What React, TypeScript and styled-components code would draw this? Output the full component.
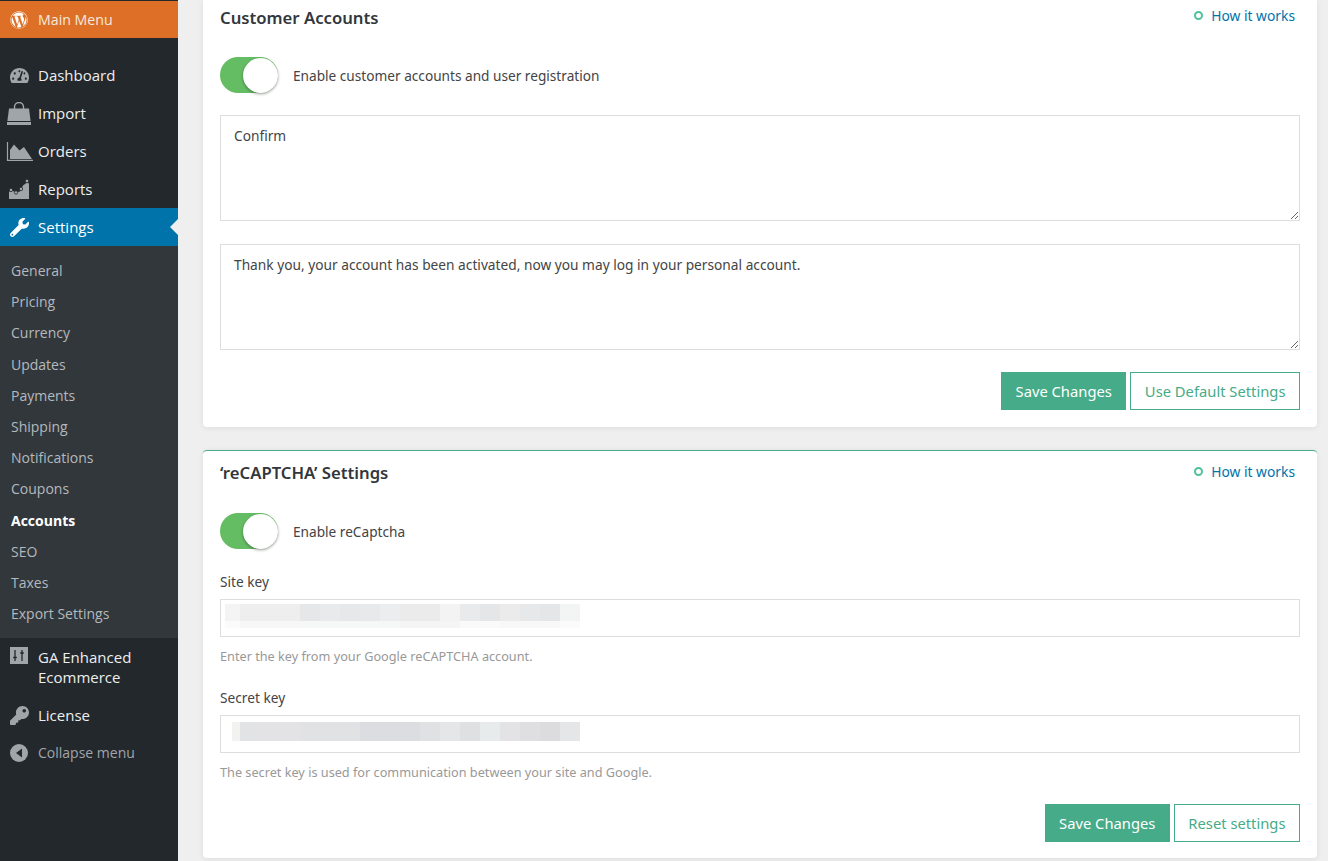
import { ReactNode } from "react";
import styled, { createGlobalStyle } from "styled-components";
import { FaWordpress, FaTachometerAlt, FaWrench, FaKey } from "react-icons/fa";

const GlobalStyle = createGlobalStyle`
  html, body {
    margin: 0;
    height: 100%;
    overflow: hidden;
    background: #efefef;
  }
  * {
    box-sizing: border-box;
  }
`;

const Page = styled.div`
  display: flex;
  height: 861px;
  font-family: "Noto Sans", "Open Sans", sans-serif;
`;

const Sidebar = styled.nav`
  flex: 0 0 178px;
  background: #23282d;
  padding-top: 1px;
  font-family: "Open Sans", "Noto Sans", sans-serif;
`;

const MainMenu = styled.div`
  height: 37px;
  display: flex;
  align-items: center;
  background: #dd7026;
  color: #f4e9df;
  font-size: 14.2px;
  margin-bottom: 18px;
`;

const IconSlot = styled.span<{ $light?: boolean }>`
  flex: 0 0 38px;
  display: flex;
  justify-content: center;
  align-items: center;
  color: ${(p) => (p.$light ? "#fff" : "#a0a5aa")};
  svg {
    display: block;
  }
`;

const MenuItem = styled.div<{ $active?: boolean; $muted?: boolean; $tall?: boolean }>`
  position: relative;
  min-height: 38px;
  display: flex;
  align-items: ${(p) => (p.$tall ? "flex-start" : "center")};
  padding-top: ${(p) => (p.$tall ? "9px" : "0")};
  padding-bottom: ${(p) => (p.$tall ? "9px" : "0")};
  background: ${(p) => (p.$active ? "#0073aa" : "transparent")};
  color: ${(p) => (p.$muted ? "#a0a5aa" : p.$active ? "#fff" : "#eee")};
  font-size: ${(p) => (p.$muted ? "14px" : "15px")};
  line-height: 20px;
`;

const ActiveArrow = styled.span`
  position: absolute;
  right: 0;
  top: 50%;
  margin-top: -8px;
  border: 8px solid transparent;
  border-left-width: 0;
  border-right-color: #efefef;
`;

const SubMenu = styled.div`
  background: #32373c;
  padding: 9px 0;
`;

const SubItem = styled.div<{ $current?: boolean }>`
  height: 31.2px;
  display: flex;
  align-items: center;
  padding-left: 11px;
  font-size: 14px;
  color: ${(p) => (p.$current ? "#fff" : "#b4b9be")};
  font-weight: ${(p) => (p.$current ? 700 : 400)};
`;

const Content = styled.main`
  flex: 1;
  padding: 0 11px 0 25px;
  display: flex;
  flex-direction: column;
  gap: 23px;
`;

const Card = styled.section<{ $accent?: boolean; $height: number }>`
  height: ${(p) => p.$height}px;
  flex: none;
  padding: 0 17px;
  background: #fff;
  border-top: ${(p) => (p.$accent ? "1px solid #45ab88" : "0")};
  border-radius: ${(p) => (p.$accent ? "4px" : "0 0 4px 4px")};
  box-shadow: 0 1px 6px rgba(0, 0, 0, 0.08);
`;

const CardHead = styled.header<{ $top: number; $height: number; $linkTop: number }>`
  display: flex;
  justify-content: space-between;
  padding: ${(p) => p.$top}px 5px 0 0;
  height: ${(p) => p.$height}px;
  a {
    margin-top: ${(p) => p.$linkTop}px;
  }
`;

const CardTitle = styled.h2`
  margin: 0;
  font-size: 16.7px;
  line-height: 24px;
  font-weight: 600;
  color: #32373c;
`;

const HowLink = styled.a`
  display: flex;
  align-items: center;
  gap: 8px;
  height: 20px;
  font-size: 13.8px;
  color: #0073aa;
`;

const HowDot = styled.span`
  width: 9px;
  height: 9px;
  border: 2px solid #4fc19d;
  border-radius: 50%;
`;

const ToggleRow = styled.div`
  display: flex;
  align-items: center;
  gap: 15px;
  height: 36px;
  font-size: 13.65px;
  color: #444;
`;

const ToggleText = styled.span`
  padding-top: 1px;
`;

const Toggle = styled.span`
  position: relative;
  width: 58px;
  height: 36px;
  border-radius: 18px;
  background: #64bd63;
`;

const Knob = styled.span`
  position: absolute;
  right: 0;
  top: 1px;
  width: 35px;
  height: 35px;
  border-radius: 50%;
  background: #fff;
  box-shadow: 0 1px 3px rgba(0, 0, 0, 0.4);
`;

const Area = styled.textarea<{ $top: number }>`
  display: block;
  width: 100%;
  height: 106px;
  margin-top: ${(p) => p.$top}px;
  padding: 10px 13px;
  border: 1px solid #ddd;
  border-radius: 0;
  outline: none;
  font: 13.72px/20px "Noto Sans", "Open Sans", sans-serif;
  color: #444;
`;

const ButtonRow = styled.div<{ $top: number }>`
  display: flex;
  justify-content: flex-end;
  gap: 4px;
  margin-top: ${(p) => p.$top}px;
`;

const SaveButton = styled.button`
  height: 38px;
  padding: 0 13.5px;
  border: 1px solid #45ab88;
  border-radius: 0;
  background: #45ab88;
  color: #fff;
  font: 14.75px "Noto Sans", "Open Sans", sans-serif;
`;

const GhostButton = styled(SaveButton)`
  background: #fff;
  color: #45ab88;
`;

const FieldLabel = styled.div<{ $top: number }>`
  margin-top: ${(p) => p.$top}px;
  height: 20px;
  line-height: 20px;
  font-size: 13.7px;
  color: #444;
`;

const InputBox = styled.div`
  position: relative;
  height: 38px;
  margin-top: 7px;
  border: 1px solid #ddd;
`;

const Mosaic = styled.div`
  position: absolute;
  left: 0;
  top: 0;
  right: 0;
  bottom: 0;
  overflow: hidden;
`;

const MosaicRow = styled.div<{ $y: number; $h: number; $x: number }>`
  position: absolute;
  left: ${(p) => p.$x}px;
  top: ${(p) => p.$y}px;
  height: ${(p) => p.$h}px;
  display: flex;
`;

const MosaicCell = styled.span<{ $w: number; $c: string }>`
  flex: 0 0 ${(p) => p.$w}px;
  background: ${(p) => p.$c};
`;

const Help = styled.div`
  margin-top: 10px;
  height: 18px;
  line-height: 18px;
  font-size: 12.7px;
  color: #999;
`;

const BagIcon = () => (
  <svg width="24" height="23" viewBox="0 0 24 23" fill="currentColor">
    <path d="M2 6.5h20l1.6 12.5H.4z" />
    <path d="M0 20h24v3H0z" />
    <path d="M7.5 8V5a4.5 4.5 0 0 1 9 0v3" fill="none" stroke="currentColor" strokeWidth="1.4" />
  </svg>
);

const AreaIcon = () => (
  <svg width="28" height="19" viewBox="0 0 28 19" fill="currentColor">
    <path d="M2.5 0v18.4H28" fill="none" stroke="currentColor" strokeWidth="1.2" />
    <path d="M5 17V8l4-5.5 5.5 6L19 5l8 12z" />
  </svg>
);

const ReportsIcon = () => (
  <svg width="20" height="20" viewBox="0 0 20 20" fill="currentColor">
    <path d="M0 20v-7l2-2 5 2.5 4-1 3-6 4-3 2 1v15.500z" />
    <g fill="#a0a5aa" stroke="#23282d" strokeWidth="0.8">
      <circle cx="2" cy="11" r="1.7" />
      <circle cx="7" cy="13.500" r="1.7" />
      <circle cx="12" cy="10" r="1.7" />
      <circle cx="18" cy="2" r="1.8" />
    </g>
  </svg>
);

const SlidersIcon = () => (
  <svg width="18" height="17" viewBox="0 0 18 17">
    <rect width="18" height="17" fill="#a0a5aa" />
    <path d="M5 3v11M3.200 10.500h3.600M12 3v11M10.200 6h3.600" stroke="#23282d" strokeWidth="1.3" />
  </svg>
);

const CollapseIcon = () => (
  <svg width="18" height="18" viewBox="0 0 18 18">
    <circle cx="9" cy="9" r="9" fill="#a0a5aa" />
    <path d="M12 4.500v9L6 9z" fill="#23282d" />
  </svg>
);

type Cell = [number, string];

const siteTop: Cell[] = [
  [15, "#f4f4f4"], [60, "#eeeeef"], [20, "#e6e7e8"], [20, "#e9eaeb"], [20, "#e7e8e9"], [20, "#e8e9ea"],
  [20, "#ecedee"], [40, "#ebebec"], [20, "#f3f3f3"], [20, "#e9eaeb"], [20, "#e5e6e7"], [20, "#ebebec"],
  [20, "#e7e8e9"], [20, "#e5e6e7"], [20, "#f3f4f4"],
];
const siteBottom: Cell[] = [
  [15, "#fbfbfb"], [60, "#f7f7f7"], [100, "#f6f7f7"], [60, "#f5f5f5"], [40, "#fafafa"], [60, "#f8f8f8"], [20, "#fbfbfb"],
];
const secretTop: Cell[] = [
  [8, "#f2f2f1"], [20, "#e2e3e5"], [40, "#e3e3e5"], [60, "#e1e2e4"], [60, "#dcdde0"], [20, "#e0e1e3"],
  [20, "#e5e6e8"], [20, "#dfe0e2"], [20, "#e8ebec"], [20, "#e3e3e5"], [20, "#dfdfe1"], [20, "#dcdcde"], [20, "#e5e6e8"],
];

const Strip = ({ x, y, h, cells }: { x: number; y: number; h: number; cells: Cell[] }) => (
  <MosaicRow $x={x} $y={y} $h={h}>
    {cells.map(([w, c], i) => (
      <MosaicCell key={i} $w={w} $c={c} />
    ))}
  </MosaicRow>
);

const subItems = [
  "General", "Pricing", "Currency", "Updates", "Payments", "Shipping",
  "Notifications", "Coupons", "Accounts", "SEO", "Taxes", "Export Settings",
];

const Item = ({ icon, children, ...rest }: { icon: ReactNode; children: ReactNode; $muted?: boolean }) => (
  <MenuItem {...rest}>
    <IconSlot>{icon}</IconSlot>
    <span>{children}</span>
  </MenuItem>
);

const How = () => (
  <HowLink>
    <HowDot />
    How it works
  </HowLink>
);

const Switch = ({ label }: { label: string }) => (
  <ToggleRow>
    <Toggle>
      <Knob />
    </Toggle>
    <ToggleText>{label}</ToggleText>
  </ToggleRow>
);

export default function App() {
  return (
    <Page>
      <GlobalStyle />
      <Sidebar>
        <MainMenu>
          <IconSlot $light>
            <FaWordpress size={18} />
          </IconSlot>
          Main Menu
        </MainMenu>
        <Item icon={<FaTachometerAlt size={19} />}>Dashboard</Item>
        <Item icon={<BagIcon />}>Import</Item>
        <Item icon={<AreaIcon />}>Orders</Item>
        <Item icon={<ReportsIcon />}>Reports</Item>
        <MenuItem $active>
          <IconSlot $light>
            <FaWrench size={19} />
          </IconSlot>
          Settings
          <ActiveArrow />
        </MenuItem>
        <SubMenu>
          {subItems.map((name) => (
            <SubItem key={name} $current={name === "Accounts"}>
              {name}
            </SubItem>
          ))}
        </SubMenu>
        <MenuItem $tall>
          <IconSlot>
            <SlidersIcon />
          </IconSlot>
          <span>
            GA Enhanced
            <br />
            Ecommerce
          </span>
        </MenuItem>
        <Item icon={<FaKey size={19} />}>License</Item>
        <Item $muted icon={<CollapseIcon />}>
          Collapse menu
        </Item>
      </Sidebar>
      <Content>
        <Card $height={427}>
          <CardHead $top={6} $height={57} $linkTop={-1}>
            <CardTitle>Customer Accounts</CardTitle>
            <How />
          </CardHead>
          <Switch label="Enable customer accounts and user registration" />
          <Area $top={22} defaultValue="Confirm" />
          <Area $top={23} defaultValue="Thank you, your account has been activated, now you may log in your personal account." />
          <ButtonRow $top={22}>
            <SaveButton>Save Changes</SaveButton>
            <GhostButton>Use Default Settings</GhostButton>
          </ButtonRow>
        </Card>
        <Card $accent $height={408}>
          <CardHead $top={10} $height={62} $linkTop={0}>
            <CardTitle>‘reCAPTCHA’ Settings</CardTitle>
            <How />
          </CardHead>
          <Switch label="Enable reCaptcha" />
          <FieldLabel $top={23}>Site key</FieldLabel>
          <InputBox>
            <Mosaic>
              <Strip x={4} y={4} h={17} cells={siteTop} />
              <Strip x={4} y={21} h={7} cells={siteBottom} />
            </Mosaic>
          </InputBox>
          <Help>Enter the key from your Google reCAPTCHA account.</Help>
          <FieldLabel $top={23}>Secret key</FieldLabel>
          <InputBox>
            <Mosaic>
              <Strip x={11} y={6} h={19} cells={secretTop} />
            </Mosaic>
          </InputBox>
          <Help>The secret key is used for communication between your site and Google.</Help>
          <ButtonRow $top={23}>
            <SaveButton>Save Changes</SaveButton>
            <GhostButton>Reset settings</GhostButton>
          </ButtonRow>
        </Card>
      </Content>
    </Page>
  );
}
